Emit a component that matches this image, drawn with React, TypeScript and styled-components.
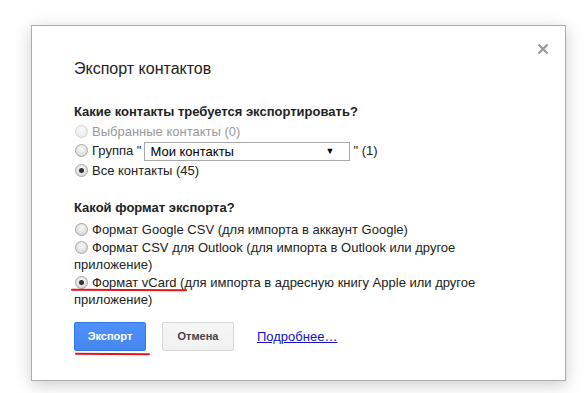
import React from 'react';
import styled, { createGlobalStyle } from 'styled-components';

const GlobalStyle = createGlobalStyle`
    body {
        margin: 0;
        background: #fff;
        font-family: Arial, "Liberation Sans", sans-serif;
        font-size: 13px;
        color: #222;
    }
`;

const Page = styled.div`
    padding: 25px 0 0 31px;
    height: 393px;
    box-sizing: border-box;
`;

const Dialog = styled.div`
    position: relative;
    width: 535px;
    height: 356px;
    box-sizing: border-box;
    border: 1px solid #acacac;
    background: #fff;
    box-shadow: 0 4px 16px rgba(0, 0, 0, 0.2);
    padding: 33px 42px 0 42px;
`;

const CloseButton = styled.div`
    position: absolute;
    top: 17px;
    right: 16px;
    width: 12px;
    height: 12px;
    cursor: pointer;
`;

const Title = styled.div`
    font-size: 16px;
    line-height: 20px;
    color: #222;
    margin-bottom: 24px;
`;

const Section = styled.div<{ $gap?: number }>`
    margin-bottom: ${(p) => p.$gap ?? 0}px;
`;

const Heading = styled.div<{ $gap: number }>`
    font-weight: bold;
    font-size: 13px;
    line-height: 17px;
    margin-bottom: ${(p) => p.$gap}px;
`;

const Option = styled.div<{ $tall?: boolean; $disabled?: boolean }>`
    line-height: ${(p) => (p.$tall ? '19px' : '17.5px')};
    color: ${(p) => (p.$disabled ? '#999' : '#222')};
    position: relative;
`;

const Radio = styled.span<{ $checked?: boolean; $disabled?: boolean }>`
    display: inline-block;
    vertical-align: -2px;
    width: 11px;
    height: 11px;
    margin: 0 4px 0 1px;
    border-radius: 50%;
    border: 1px solid ${(p) => (p.$disabled ? '#d4d4d4' : '#a6a6a6')};
    background: ${(p) =>
        p.$disabled
            ? 'radial-gradient(circle at 50% 35%, #fafafa, #e6e6e6)'
            : 'radial-gradient(circle at 50% 35%, #f8f8f8, #d0d0d0)'};
    position: relative;
    &::after {
        content: '';
        display: ${(p) => (p.$checked ? 'block' : 'none')};
        position: absolute;
        left: 3px;
        top: 3px;
        width: 5px;
        height: 5px;
        border-radius: 50%;
        background: #333;
    }
`;

const Select = styled.div`
    display: inline-flex;
    align-items: center;
    justify-content: space-between;
    width: 206px;
    height: 19px;
    box-sizing: border-box;
    border: 1px solid #a9a9a9;
    padding: 0 15px 0 5px;
    margin: 0 3px 0 3px;
    vertical-align: middle;
    color: #000;
    line-height: 17px;
`;

const Arrow = styled.span`
    font-size: 9px;
    color: #000;
`;

const Scribble = styled.span<{ $left: number; $width: number; $top: number }>`
    position: absolute;
    left: ${(p) => p.$left}px;
    top: ${(p) => p.$top}px;
    width: ${(p) => p.$width}px;
    height: 2px;
    background: #e8141c;
    border-radius: 1px;
    transform: rotate(0.3deg);
`;

const Actions = styled.div`
    display: flex;
    align-items: center;
`;

const Button = styled.button<{ $primary?: boolean }>`
    position: relative;
    height: 29px;
    width: 72px;
    margin-right: 16px;
    border-radius: 2px;
    font-family: Arial, "Liberation Sans", sans-serif;
    font-size: 11px;
    font-weight: bold;
    border: 1px solid ${(p) => (p.$primary ? '#3079ed' : '#d9d9d9')};
    background: ${(p) =>
        p.$primary ? 'linear-gradient(#4d90fe, #4787ed)' : 'linear-gradient(#f5f5f5, #f1f1f1)'};
    color: ${(p) => (p.$primary ? '#fff' : '#444')};
    padding: 0;
`;

const MoreLink = styled.a`
    margin-left: 7px;
    color: #1111cc;
    text-decoration: underline;
    font-size: 13px;
`;

const App: React.FC = () => {
    return (
        <Page>
            <GlobalStyle />
            <Dialog>
                <CloseButton>
                    <svg width="12" height="12" viewBox="0 0 12 12">
                        <path d="M1.5 1.5 L10.5 10.5 M10.5 1.5 L1.5 10.5" stroke="#999" strokeWidth="2.2" />
                    </svg>
                </CloseButton>
                <Title>Экспорт контактов</Title>
                <Section $gap={19}>
                    <Heading $gap={2}>Какие контакты требуется экспортировать?</Heading>
                    <Option $tall $disabled>
                        <Radio $disabled />Выбранные контакты (0)
                    </Option>
                    <Option $tall>
                        <Radio />Группа "
                        <Select>
                            Мои контакты
                            <Arrow>▼</Arrow>
                        </Select>
                        " (1)
                    </Option>
                    <Option $tall>
                        <Radio $checked />Все контакты (45)
                    </Option>
                </Section>
                <Section $gap={13}>
                    <Heading $gap={5}>Какой формат экспорта?</Heading>
                    <Option>
                        <Radio />Формат Google CSV (для импорта в аккаунт Google)
                    </Option>
                    <Option>
                        <Radio />Формат CSV для Outlook (для импорта в Outlook или другое приложение)
                    </Option>
                    <Option>
                        <Radio $checked />Формат vCard (для импорта в адресную книгу Apple или другое приложение)
                        <Scribble $left={-3} $width={116} $top={15} />
                    </Option>
                </Section>
                <Actions>
                    <Button $primary>
                        Экспорт
                        <Scribble $left={0} $width={75} $top={30} />
                    </Button>
                    <Button>Отмена</Button>
                    <MoreLink href="#">Подробнее…</MoreLink>
                </Actions>
            </Dialog>
        </Page>
    );
};

export default App;
